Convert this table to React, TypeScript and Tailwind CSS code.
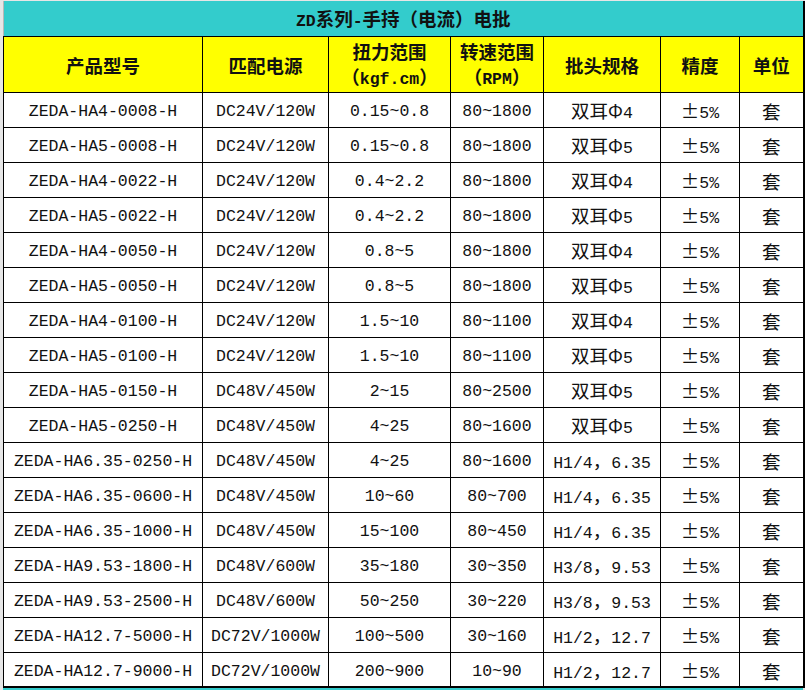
const MONO = "font-['Liberation_Mono','DejaVu_Sans_Mono',monospace] text-[16.5px]";
const CJK = "font-['Noto_Sans_CJK_SC','Noto_Sans',sans-serif] text-[18.5px]";

// SimSun-like look: ASCII runs in a monospace face, everything else in a CJK face
function Mixed({ text }: { text: string }) {
  const parts = text.split(/([\x20-\x7e]+)/).filter((p) => p.length > 0);
  return (
    <>
      {parts.map((p, i) =>
        /^[\x20-\x7e]+$/.test(p) ? (
          <span key={i} className={MONO}>
            {p}
          </span>
        ) : (
          <span key={i} className={CJK}>
            {p}
          </span>
        ),
      )}
    </>
  );
}

const rows: string[][] = [
  ["ZEDA-HA4-0008-H", "DC24V/120W", "0.15~0.8", "80~1800", "双耳Φ4"],
  ["ZEDA-HA5-0008-H", "DC24V/120W", "0.15~0.8", "80~1800", "双耳Φ5"],
  ["ZEDA-HA4-0022-H", "DC24V/120W", "0.4~2.2", "80~1800", "双耳Φ4"],
  ["ZEDA-HA5-0022-H", "DC24V/120W", "0.4~2.2", "80~1800", "双耳Φ5"],
  ["ZEDA-HA4-0050-H", "DC24V/120W", "0.8~5", "80~1800", "双耳Φ4"],
  ["ZEDA-HA5-0050-H", "DC24V/120W", "0.8~5", "80~1800", "双耳Φ5"],
  ["ZEDA-HA4-0100-H", "DC24V/120W", "1.5~10", "80~1100", "双耳Φ4"],
  ["ZEDA-HA5-0100-H", "DC24V/120W", "1.5~10", "80~1100", "双耳Φ5"],
  ["ZEDA-HA5-0150-H", "DC48V/450W", "2~15", "80~2500", "双耳Φ5"],
  ["ZEDA-HA5-0250-H", "DC48V/450W", "4~25", "80~1600", "双耳Φ5"],
  ["ZEDA-HA6.35-0250-H", "DC48V/450W", "4~25", "80~1600", "H1/4，6.35"],
  ["ZEDA-HA6.35-0600-H", "DC48V/450W", "10~60", "80~700", "H1/4，6.35"],
  ["ZEDA-HA6.35-1000-H", "DC48V/450W", "15~100", "80~450", "H1/4，6.35"],
  ["ZEDA-HA9.53-1800-H", "DC48V/600W", "35~180", "30~350", "H3/8，9.53"],
  ["ZEDA-HA9.53-2500-H", "DC48V/600W", "50~250", "30~220", "H3/8，9.53"],
  ["ZEDA-HA12.7-5000-H", "DC72V/1000W", "100~500", "30~160", "H1/2，12.7"],
  ["ZEDA-HA12.7-9000-H", "DC72V/1000W", "200~900", "10~90", "H1/2，12.7"],
];

const cell = "border border-black text-center align-middle p-0 whitespace-nowrap leading-none";

export default function App() {
  return (
    <div className="h-[690px] w-[805px] overflow-hidden bg-[#e6e6e6] pt-px pl-[3px] text-[#111]">
      <table className="w-[800px] table-fixed border-collapse border-r-2 border-b-2 border-l border-r-black border-b-black border-l-[#b8b8b8]">
        <colgroup>
          <col className="w-[199px]" />
          <col className="w-[126px]" />
          <col className="w-[122px]" />
          <col className="w-[93px]" />
          <col className="w-[117px]" />
          <col className="w-[79px]" />
          <col className="w-[64px]" />
        </colgroup>
        <tbody>
          <tr className="h-[35px] bg-[#33cccc] font-bold">
            <td colSpan={7} className={cell + " border-t-0 border-l-0 pt-[3px]"}>
              <Mixed text="ZD系列-手持（电流）电批" />
            </td>
          </tr>
          <tr className="h-[56px] bg-[#ffff00] font-bold">
            <td className={cell + " pt-[3px]"}>
              <Mixed text="产品型号" />
            </td>
            <td className={cell + " pt-[3px]"}>
              <Mixed text="匹配电源" />
            </td>
            <td className={cell}>
              <div className="flex flex-col items-center gap-[6px] pt-[2px]">
                <div>
                  <Mixed text="扭力范围" />
                </div>
                <div>
                  <Mixed text="（kgf.cm）" />
                </div>
              </div>
            </td>
            <td className={cell}>
              <div className="flex flex-col items-center gap-[6px] pt-[2px]">
                <div>
                  <Mixed text="转速范围" />
                </div>
                <div>
                  <Mixed text="（RPM）" />
                </div>
              </div>
            </td>
            <td className={cell + " pt-[3px]"}>
              <Mixed text="批头规格" />
            </td>
            <td className={cell + " pt-[3px]"}>
              <Mixed text="精度" />
            </td>
            <td className={cell + " pt-[3px]"}>
              <Mixed text="单位" />
            </td>
          </tr>
          {rows.map((r) => (
            <tr key={r[0]} className="h-[35px] bg-white">
              {r.map((v, i) => (
                <td key={i} className={cell + " pt-[4px]"}>
                  <Mixed text={v} />
                </td>
              ))}
              <td className={cell + " pt-[4px]"}>
                <Mixed text="±5%" />
              </td>
              <td className={cell + " pt-[4px]"}>
                <Mixed text="套" />
              </td>
            </tr>
          ))}
        </tbody>
      </table>
      <div className="h-[10px] w-[800px] bg-[#33cccc]" />
    </div>
  );
}
